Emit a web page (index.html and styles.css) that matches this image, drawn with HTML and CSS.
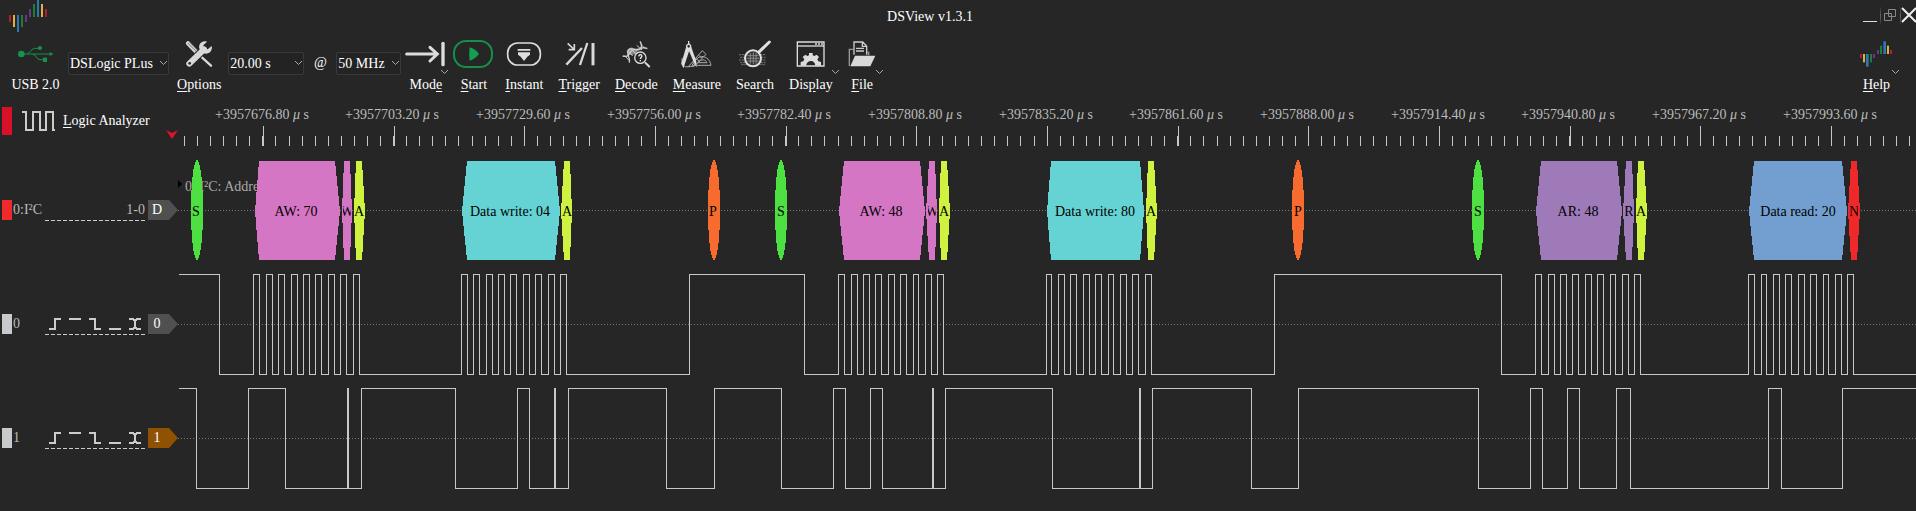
FILE: index.html
```
<!DOCTYPE html>
<html lang="en">
<head>
<meta charset="utf-8">
<title>DSView v1.3.1</title>
<link rel="stylesheet" href="styles.css">
</head>
<body>
<header class="titlebar">
  <svg class="logo" viewBox="0 0 150 99" aria-hidden="true">
    <g class="c-red"><rect x="27" y="45" width="6" height="21"/><rect x="135" y="27" width="6" height="24"/></g>
    <g class="c-yellow"><rect x="39" y="45" width="6" height="36"/><rect x="123" y="12" width="6" height="39"/></g>
    <g class="c-blue"><rect x="51" y="45" width="6" height="51"/><rect x="111" y="0" width="6" height="51"/></g>
    <g class="c-green"><rect x="63" y="45" width="6" height="36"/><rect x="99" y="12" width="6" height="39"/></g>
    <g class="c-purple"><rect x="75" y="45" width="6" height="21"/><rect x="87" y="27" width="6" height="24"/></g>
  </svg>
  <h1 class="title">DSView v1.3.1</h1>
  <div class="controls">
    <button class="ctl" aria-label="Minimize"><svg viewBox="0 0 20 20"><path d="M3 15.500H17" stroke="#ddd"/></svg></button>
    <button class="ctl ctl-sep" aria-label="Restore"><svg viewBox="0 0 20 20"><path d="M8.500 3.500H15.500V10.500H8.500ZM4.500 7.500H11.500V14.500H4.500Z" stroke="#888"/></svg></button>
    <button class="ctl ctl-sep ctl-close" aria-label="Close"><svg viewBox="0 0 16 20"><path d="M2 2L16 16M2 16L16 2" stroke="#eee" stroke-width="2"/></svg></button>
  </div>
</header>

<nav class="toolbar">
  <button class="tool device">
    <svg class="icon w36" viewBox="51 108 108 108"><g fill="none" stroke="#12944a" stroke-width="3"><path d="M64 162H150M82 160C94 160 92 145 104 145H118M98 163C110 163 108 179 120 179H130"/></g><g fill="#12944a"><circle cx="64" cy="162" r="10"/><path d="M149 156L160 162L149 168Z"/><circle cx="120" cy="144" r="6"/><rect x="129" y="173" width="12" height="13"/></g></svg>
    <span class="label">USB 2.0</span>
  </button>
  <div class="field device-field"><select aria-label="Device"><option>DSLogic PLus</option></select><svg class="arrow" viewBox="0 0 9 6"><path d="M1 1L4.500 4.500L8 1"/></svg></div>
  <button class="tool">
    <svg class="icon w32" viewBox="546 108 96 108"><path d="M561 130L590 160" stroke="#d8d8d8" stroke-width="13" stroke-linecap="round"/><path d="M560 129L590 159M566 127L592 153" stroke="#444" stroke-width="2"/><path d="M596 166L630 197" stroke="#d8d8d8" stroke-width="7" stroke-linecap="round"/><path d="M565 191L609 148" stroke="#262626" stroke-width="24" stroke-linecap="round"/><path d="M565 191L609 148" stroke="#d8d8d8" stroke-width="18" stroke-linecap="round"/><path d="M618 125C602 120 590 134 596 148L608 160C622 165 636 153 632 138L620 148L609 146L607 136Z" fill="#d8d8d8"/><circle cx="566" cy="190" r="4" fill="#262626"/></svg>
    <span class="label"><u>O</u>ptions</span>
  </button>
  <div class="field duration-field"><select aria-label="Duration"><option>20.00 s</option></select><svg class="arrow" viewBox="0 0 9 6"><path d="M1 1L4.500 4.500L8 1"/></svg></div>
  <span class="at">@</span>
  <div class="field rate-field"><select aria-label="Sample rate"><option>50 MHz</option></select><svg class="arrow" viewBox="0 0 9 6"><path d="M1 1L4.500 4.500L8 1"/></svg></div>
  <button class="tool">
    <svg class="icon w40" viewBox="15 108 120 108"><path d="M20 162H108M90 142L112 162L90 183" fill="none" stroke="#ddd" stroke-width="9" stroke-linecap="round"/><path d="M129 130V194" stroke="#ddd" stroke-width="10" stroke-linecap="round"/></svg>
    <svg class="more" viewBox="0 0 9 6"><path d="M1 1L4.500 4.500L8 1"/></svg>
    <span class="label">Mod<u>e</u></span>
  </button>
  <button class="tool">
    <svg class="icon w40" viewBox="156 108 120 108"><rect x="159" y="123" width="114" height="78" rx="36" fill="none" stroke="#15904a" stroke-width="6"/><path d="M206 142Q222 146 234 162Q222 178 206 182Q203 162 206 142Z" fill="#12a050"/></svg>
    <span class="label"><u>S</u>tart</span>
  </button>
  <button class="tool">
    <svg class="icon w36" viewBox="312 108 108 108"><rect x="317" y="129" width="98" height="66" rx="30" fill="none" stroke="#ddd" stroke-width="5"/><path d="M347 147H385V152H347ZM348 157H384V164L376 170L366 183L356 170L348 164Z" fill="#ddd"/></svg>
    <span class="label"><u>I</u>nstant</span>
  </button>
  <button class="tool">
    <svg class="icon w32" viewBox="484 108 96 108"><g fill="none" stroke="#d8d8d8"><path d="M498 130L516 147M518 132V149H501" stroke-width="5"/><path d="M494 194L541 144M535 195L557 129" stroke-width="7"/><path d="M574 129V196" stroke-width="9"/></g></svg>
    <span class="label"><u>T</u>rigger</span>
  </button>
  <button class="tool">
    <svg class="icon w32" viewBox="656 108 96 108"><path d="M676 152Q684 140 694 143L706 149Q712 158 704 162L690 165Q676 164 676 152Z" fill="#8a8a8a"/><g fill="none" stroke="#ccc" stroke-width="4"><path d="M664 168C690 176 680 146 704 148C722 150 724 136 716 124M684 188C688 170 672 160 682 150C690 140 706 156 716 148C724 140 730 142 738 146"/><path d="M670 167L684 182M681 153L694 168M690 147L702 160M706 136L722 150M717 132L730 144" stroke-width="3"/></g><circle cx="717" cy="173" r="17" fill="#262626" stroke="#ddd" stroke-width="4"/><path d="M731 187L745 201" stroke="#ddd" stroke-width="6"/><path d="M712 169Q713 163 718 164Q724 167 720 172Q717 174 717 177M717 180V184" fill="none" stroke="#eee" stroke-width="4"/></svg>
    <span class="label"><u>D</u>ecode</span>
  </button>
  <button class="tool">
    <svg class="icon w32" viewBox="836 108 96 108"><g fill="none" stroke="#aaa" stroke-width="3"><path d="M872 196H929C927 181 917 171 901 169Q889 170 880 184ZM889 188H917C913 177 898 177 889 188Z"/><path d="M862 199L903 152L914 163L879 199ZM874 188L886 200M884 176L895 184M891 165L902 174"/><path d="M842 174V194Q852 204 866 200"/></g><path d="M857 139L842 190L846 199L863 148L880 188L884 194L882 181L867 139Z" fill="#ddd" stroke="#ddd" stroke-width="4"/><circle cx="862" cy="139" r="6" fill="#262626" stroke="#ddd" stroke-width="4"/><path d="M862 123V134" stroke="#ddd" stroke-width="4"/></svg>
    <span class="label"><u>M</u>easure</span>
  </button>
  <button class="tool">
    <svg class="icon w33" viewBox="1008 108 99 108"><path d="M1011 164H1092M1014 172H1091M1011 180H1092M1014 188H1091M1018 194H1091" stroke="#747474" stroke-width="3" stroke-dasharray="7 2"/><circle cx="1053" cy="175" r="24" fill="#333" stroke="#e0e0e0" stroke-width="6"/><path d="M1036 167H1070M1034 175H1072M1036 183H1070M1045 159V191M1054 157V193M1062 159V191" stroke="#888" stroke-width="3"/><path d="M1072 155L1102 126" stroke="#e0e0e0" stroke-width="9" stroke-linecap="round"/></svg>
    <span class="label">Sea<u>r</u>ch</span>
  </button>
  <button class="tool">
    <svg class="icon w32" viewBox="1177 108 96 108"><path d="M1187 126H1267V198H1187Z" fill="none" stroke="#ddd" stroke-width="4"/><path d="M1187 138H1267" stroke="#ddd" stroke-width="4"/><path d="M1240 132H1246M1249 132H1255M1258 132H1264" stroke="#ddd" stroke-width="5"/><path d="M1197 197V186L1205 184L1208 178L1203 171L1211 164L1217 168L1222 166V159H1233V166L1238 168L1245 164L1252 171L1247 178L1250 184L1258 186V197H1241Q1239 183 1228 183Q1216 183 1213 197Z" fill="#ddd"/></svg>
    <svg class="more" viewBox="0 0 9 6"><path d="M1 1L4.500 4.500L8 1"/></svg>
    <span class="label">Dis<u>p</u>lay</span>
  </button>
  <button class="tool">
    <svg class="icon w32" viewBox="1334 108 96 108"><g fill="none" stroke="#ccc" stroke-width="4"><path d="M1358 164V126H1384L1396 138V164M1383 126V139H1396M1364 145H1388M1364 153H1388"/><path d="M1356 148H1344V198M1396 157H1402V166" stroke="#999"/></g><path d="M1361 167H1422L1407 199H1347Z" fill="#d8d8d8"/></svg>
    <svg class="more" viewBox="0 0 9 6"><path d="M1 1L4.500 4.500L8 1"/></svg>
    <span class="label"><u>F</u>ile</span>
  </button>
  <button class="tool help">
    <svg class="icon w32" viewBox="1272 108 96 108">
      <g class="c-red"><rect x="1272" y="162" width="6" height="12"/><rect x="1362" y="150" width="6" height="12"/></g>
      <g class="c-yellow"><rect x="1281" y="162" width="6" height="25"/><rect x="1353" y="137" width="6" height="25"/></g>
      <g class="c-blue"><rect x="1290" y="162" width="8" height="38"/><rect x="1342" y="124" width="8" height="38"/></g>
      <g class="c-green"><rect x="1302" y="162" width="6" height="25"/><rect x="1332" y="137" width="6" height="25"/></g>
      <g class="c-purple"><rect x="1311" y="162" width="6" height="12"/><rect x="1323" y="150" width="6" height="12"/></g>
    </svg>
    <svg class="more" viewBox="0 0 9 6"><path d="M1 1L4.500 4.500L8 1"/></svg>
    <span class="label"><u>H</u>elp</span>
  </button>
</nav>

<main>
  <section class="row ruler">
    <div class="head analyzer">
      <span class="swatch swatch-tall"></span>
      <svg class="pulse" viewBox="0 0 34 22"><path d="M0 2H4V20H11V2H18V20H24V2H31V20H33" fill="none" stroke="#ccc" stroke-width="2"/></svg>
      <span class="name"><u>L</u>ogic Analyzer</span>
      <svg class="pointer" viewBox="0 0 12 9"><path d="M0 0L6 3L12 0L6 9Z" fill="#e01428"/></svg>
    </div>
    <svg class="plot" viewBox="178 0 1738 56" preserveAspectRatio="xMinYMid slice">
      <path class="minor" d="M184 44H1916"/>
      <path class="major" d="M263 39H1916"/>
      <g class="time">
        <text x="262" y="22">+3957676.80 <tspan class="mu">μ</tspan> s</text>
        <text x="392" y="22">+3957703.20 <tspan class="mu">μ</tspan> s</text>
        <text x="523" y="22">+3957729.60 <tspan class="mu">μ</tspan> s</text>
        <text x="654" y="22">+3957756.00 <tspan class="mu">μ</tspan> s</text>
        <text x="784" y="22">+3957782.40 <tspan class="mu">μ</tspan> s</text>
        <text x="915" y="22">+3957808.80 <tspan class="mu">μ</tspan> s</text>
        <text x="1046" y="22">+3957835.20 <tspan class="mu">μ</tspan> s</text>
        <text x="1176" y="22">+3957861.60 <tspan class="mu">μ</tspan> s</text>
        <text x="1307" y="22">+3957888.00 <tspan class="mu">μ</tspan> s</text>
        <text x="1438" y="22">+3957914.40 <tspan class="mu">μ</tspan> s</text>
        <text x="1568" y="22">+3957940.80 <tspan class="mu">μ</tspan> s</text>
        <text x="1699" y="22">+3957967.20 <tspan class="mu">μ</tspan> s</text>
        <text x="1830" y="22">+3957993.60 <tspan class="mu">μ</tspan> s</text>
      </g>
    </svg>
  </section>

  <section class="row">
    <div class="head">
      <span class="swatch swatch-red"></span>
      <span class="chan">0:I²C</span>
      <span class="slot range">1-0</span>
      <span class="tag">D</span>
    </div>
    <svg class="plot" viewBox="178 0 1738 114" preserveAspectRatio="xMinYMid slice">
      <path class="axis" d="M178 57.500H1916"/>
      <path d="M178 27L182 31L178 35Z" fill="#000"/>
      <text class="note" x="185" y="38">0: I²C: Address</text>
      <g class="shapes">
        <g fill="#4edf42"><ellipse cx="197" cy="57" rx="6" ry="50"/><ellipse cx="781" cy="57" rx="6" ry="50"/><ellipse cx="1478" cy="57" rx="6" ry="50"/></g>
        <g fill="#f76b2f"><ellipse cx="714" cy="57" rx="6" ry="50"/><ellipse cx="1298" cy="57" rx="6" ry="50"/></g>
        <path fill="#d576c4" d="M259 8H335L340 58L335 107H259L255 58ZM344 8H350L352 58L350 107H344L342 58ZM844 8H920L925 58L920 107H844L839 58ZM929 8H935L937 58L935 107H929L926 58Z"/>
        <path fill="#65d3d3" d="M467 8H555L560 58L555 107H467L462 58ZM1051 8H1140L1144 58L1140 107H1051L1047 58Z"/>
        <path fill="#cef23f" d="M356 8H362L365 58L362 107H356L354 58ZM564 8H570L572 58L570 107H564L561 58ZM941 8H947L950 58L947 107H941L939 58ZM1148 8H1154L1157 58L1154 107H1148L1146 58ZM1638 8H1644L1647 58L1644 107H1638L1636 58Z"/>
        <path fill="#9f7ab9" d="M1541 8H1617L1622 58L1617 107H1541L1536 58ZM1626 8H1632L1634 58L1632 107H1626L1623 58Z"/>
        <path fill="#729fcf" d="M1754 8H1842L1847 58L1842 107H1754L1749 58Z"/>
        <path fill="#ef2929" d="M1851 8H1857L1860 58L1857 107H1851L1848 58Z"/>
      </g>
      <g class="ann">
        <text x="196" y="63">S</text>
        <text x="296" y="63">AW: 70</text>
        <svg x="343" y="0" width="8" height="114"><text x="4" y="63">W</text></svg>
        <text x="359" y="63">A</text>
        <text x="510" y="63">Data write: 04</text>
        <text x="567" y="63">A</text>
        <text x="713" y="63">P</text>
        <text x="781" y="63">S</text>
        <text x="881" y="63">AW: 48</text>
        <svg x="928" y="0" width="8" height="114"><text x="4" y="63">W</text></svg>
        <text x="944" y="63">A</text>
        <text x="1095" y="63">Data write: 80</text>
        <text x="1151" y="63">A</text>
        <text x="1298" y="63">P</text>
        <text x="1478" y="63">S</text>
        <text x="1578" y="63">AR: 48</text>
        <svg x="1625" y="0" width="8" height="114"><text x="4" y="63">R</text></svg>
        <text x="1641" y="63">A</text>
        <text x="1798" y="63">Data read: 20</text>
        <svg x="1850" y="0" width="8" height="114"><text x="4" y="63">N</text></svg>
      </g>
    </svg>
  </section>

  <section class="row">
    <div class="head">
      <span class="swatch"></span>
      <span class="chan">0</span>
      <div class="slot">
        <button class="trig" aria-label="Rising edge"><svg viewBox="0 0 20 20"><path d="M4 15H10V5H16"/></svg></button>
        <button class="trig" aria-label="High level"><svg viewBox="0 0 20 20"><path d="M4 5H16"/></svg></button>
        <button class="trig" aria-label="Falling edge"><svg viewBox="0 0 20 20"><path d="M4 5H10V15H16"/></svg></button>
        <button class="trig" aria-label="Low level"><svg viewBox="0 0 20 20"><path d="M4 15H16"/></svg></button>
        <button class="trig" aria-label="Either edge"><svg viewBox="0 0 20 20"><path d="M4 5H9M11 5H16M4 15H9M11 15H16M8 6H12M8 14H12M10 6V14"/></svg></button>
      </div>
      <span class="tag">0</span>
    </div>
    <svg class="plot" viewBox="178 0 1738 114" preserveAspectRatio="xMinYMid slice">
      <path class="axis" d="M178 57.500H1916"/>
      <path class="wave" transform="translate(.5 .5)" d="M178 7H219V107H253V7H259V107H266V7H272V107H278V7H284V107H291V7H297V107H303V7H309V107H315V7H321V107H328V7H334V107H340V7H346V107H353V7H359V107H461V7H467V107H473V7H479V107H486V7H492V107H498V7H504V107H510V7H516V107H523V7H529V107H535V7H541V107H548V7H554V107H560V7H566V107H689V7H804V107H838V7H844V107H851V7H857V107H863V7H869V107H875V7H881V107H888V7H894V107H900V7H906V107H913V7H918V107H925V7H931V107H937V7H943V107H1046V7H1051V107H1058V7H1064V107H1070V7H1076V107H1083V7H1089V107H1095V7H1101V107H1108V7H1113V107H1120V7H1126V107H1132V7H1138V107H1145V7H1151V107H1274V7H1501V107H1535V7H1541V107H1548V7H1554V107H1560V7H1566V107H1572V7H1578V107H1585V7H1591V107H1597V7H1603V107H1610V7H1615V107H1622V7H1628V107H1634V7H1640V107H1748V7H1754V107H1761V7H1766V107H1773V7H1779V107H1785V7H1791V107H1798V7H1804V107H1810V7H1816V107H1823V7H1828V107H1835V7H1841V107H1847V7H1853V107H1916"/>
    </svg>
  </section>

  <section class="row">
    <div class="head">
      <span class="swatch"></span>
      <span class="chan">1</span>
      <div class="slot">
        <button class="trig" aria-label="Rising edge"><svg viewBox="0 0 20 20"><path d="M4 15H10V5H16"/></svg></button>
        <button class="trig" aria-label="High level"><svg viewBox="0 0 20 20"><path d="M4 5H16"/></svg></button>
        <button class="trig" aria-label="Falling edge"><svg viewBox="0 0 20 20"><path d="M4 5H10V15H16"/></svg></button>
        <button class="trig" aria-label="Low level"><svg viewBox="0 0 20 20"><path d="M4 15H16"/></svg></button>
        <button class="trig" aria-label="Either edge"><svg viewBox="0 0 20 20"><path d="M4 5H9M11 5H16M4 15H9M11 15H16M8 6H12M8 14H12M10 6V14"/></svg></button>
      </div>
      <span class="tag tag-brown">1</span>
    </div>
    <svg class="plot" viewBox="178 0 1738 114" preserveAspectRatio="xMinYMid slice">
      <path class="axis" d="M178 57.500H1916"/>
      <path class="wave" transform="translate(.5 .5)" d="M178 7H196V107H248V7H285V107H347V7H348V107H361V7H455V107H517V7H529V107H554V7H555V107H568V7H666V107H714V7H781V107H833V7H845V107H870V7H882V107H932V7H933V107H945V7H1052V107H1139V7H1140V107H1152V7H1251V107H1298V7H1478V107H1530V7H1542V107H1567V7H1579V107H1616V7H1630V107H1768V7H1781V107H1842V7H1916"/>
    </svg>
  </section>
</main>
</body>
</html>
```

FILE: styles.css
```
* {
  box-sizing: border-box;
}

body {
  margin: 0;
  min-height: 100vh;
  background: #262626;
  color: #fff;
  font: 14px/20px "Liberation Serif", serif;
  overflow-x: hidden;
}

button,
select {
  margin: 0;
  padding: 0;
  border: 0;
  background: none;
  color: inherit;
  font: inherit;
}

svg {
  display: block;
}

u {
  text-underline-offset: 2px;
}

.c-red { fill: #b0202c; }
.c-yellow { fill: #e0b040; }
.c-blue { fill: #2a78b4; }
.c-green { fill: #1f7d38; }
.c-purple { fill: #643a86; }

/* Title bar */
.titlebar {
  position: relative;
  display: flex;
  height: 36px;
}

.logo {
  position: absolute;
  left: 0;
  top: 0;
  width: 50px;
  height: 33px;
}

.title {
  flex: 1;
  margin: 0;
  padding-top: 7px;
  text-align: center;
  font-size: 14px;
  font-weight: normal;
}

.controls {
  display: flex;
  padding-top: 6px;
}

.ctl {
  width: 20px;
  height: 20px;
}

.ctl svg {
  width: 20px;
  height: 20px;
  fill: none;
}

.ctl-sep {
  background: linear-gradient(#262626, #666, #262626) left / 1px 100% no-repeat;
}

.ctl-close,
.ctl-close svg {
  width: 16px;
}

/* Toolbar */
.toolbar {
  display: flex;
  align-items: flex-start;
  height: 61px;
}

.tool {
  position: relative;
  display: flex;
  flex-direction: column;
  align-items: center;
  gap: 3px;
  min-width: 44px;
  padding: 0 4px;
}

.device {
  width: 68px;
  padding: 0 2px 0 4px;
}

.help {
  margin-left: auto;
  margin-right: 16px;
  min-width: 48px;
}

.label {
  padding: 0 3px 0 4px;
  white-space: nowrap;
}

.icon { height: 36px; }
.w32 { width: 32px; }
.w33 { width: 33px; }
.w36 { width: 36px; }
.w40 { width: 40px; }

.arrow,
.more {
  position: absolute;
  width: 9px;
  height: 6px;
  fill: none;
  stroke: #aaa;
  pointer-events: none;
}

.more {
  right: 0;
  top: 33px;
}

.arrow {
  right: 1px;
  top: 8px;
}

.field {
  position: relative;
  margin-top: 16px;
}

.field select {
  width: 100%;
  height: 23px;
  padding-left: 1px;
  border: 1px solid #393939;
  border-radius: 2px;
  background: #232323;
  appearance: none;
}

.device-field { width: 101px; }
.duration-field { width: 76px; }
.rate-field { width: 65px; }

.at {
  width: 32px;
  padding-top: 17px;
  text-align: center;
}

/* Signal rows */
.row {
  display: grid;
  grid-template-columns: 178px 1fr;
  height: 114px;
}

.ruler {
  height: 56px;
}

.head {
  display: flex;
  align-items: center;
  padding-left: 2px;
  color: #bbb;
}

.plot {
  width: 100%;
  height: 100%;
  min-width: 0;
}

.swatch {
  width: 10px;
  height: 20px;
  margin-right: 1px;
  background: #c8c9cb;
}

.swatch-red {
  background: #f02a2a;
}

.swatch-tall {
  height: 28px;
  margin-right: 10px;
  background: #d81028;
}

.analyzer {
  padding-bottom: 8px;
  color: #fff;
}

.pulse {
  width: 34px;
  height: 22px;
}

.name {
  flex: 1;
  padding-left: 7px;
}

.pointer {
  width: 12px;
  height: 9px;
  align-self: flex-end;
  margin-bottom: 6px;
}

.chan {
  width: 32px;
  white-space: nowrap;
}

.slot {
  display: flex;
  width: 100px;
  height: 21px;
  margin-right: 3px;
  background: repeating-linear-gradient(90deg, #ccc 0 4px, transparent 4px 6px) bottom / 100% 1px no-repeat;
}

.range {
  justify-content: flex-end;
}

.trig,
.trig svg {
  width: 20px;
  height: 20px;
}

.trig path {
  fill: none;
  stroke: #ccc;
  stroke-width: 2;
}

.tag {
  width: 30px;
  height: 20px;
  padding-right: 12px;
  background: #505050;
  clip-path: polygon(0 0, 21px 0, 100% 50%, 21px 100%, 0 100%);
  color: #fff;
  text-align: center;
}

.tag-brown {
  background: #8f5202;
}

.minor,
.major,
.wave {
  fill: none;
  stroke: #c8c8c8;
  shape-rendering: crispEdges;
}

.minor {
  stroke-width: 10px;
  stroke-dasharray: 1 12.07;
}

.major {
  stroke-width: 20px;
  stroke-dasharray: 1 129.68;
}

.axis {
  stroke: #777;
  stroke-dasharray: 1 2;
  shape-rendering: crispEdges;
}

.shapes {
  shape-rendering: crispEdges;
}

.time {
  fill: #bbb;
  text-anchor: middle;
}

.mu {
  font-style: italic;
}

.note {
  fill: #aaa;
}

.ann {
  fill: #000;
  text-anchor: middle;
}
```
